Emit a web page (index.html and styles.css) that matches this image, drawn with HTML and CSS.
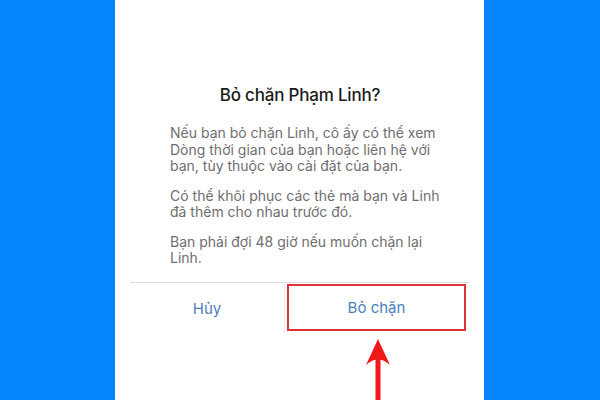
FILE: index.html
```html
<!DOCTYPE html>
<html lang="vi">
<head>
    <meta charset="UTF-8">
    <meta name="viewport" content="width=device-width, initial-scale=1.0">
    <title>Bỏ chặn Phạm Linh?</title>
    <link rel="stylesheet" href="styles.css">
</head>
<body>
    <div class="side"></div>

    <div class="screen">
        <div class="dialog">
            <div class="dialog-title">Bỏ chặn Phạm Linh?</div>

            <div class="dialog-body">
                <p>Nếu bạn bỏ chặn Linh, cô ấy có thể xem Dòng thời gian của bạn hoặc liên hệ với bạn, tùy thuộc vào cài đặt của bạn.</p>
                <p>Có thể khôi phục các thẻ mà bạn và Linh đã thêm cho nhau trước đó.</p>
                <p>Bạn phải đợi 48 giờ nếu muốn chặn lại Linh.</p>
            </div>

            <div class="dialog-actions">
                <button class="action-btn">Hủy</button>
                <button class="action-btn highlighted">Bỏ chặn</button>
            </div>
        </div>

        <!-- pointer to the unblock button -->
        <svg class="arrow" width="26" height="62" viewBox="0 0 26 62">
            <path d="M13 1 L25 27 Q18 21 13 22 Q8 21 1 27 Z" fill="#f01818"/>
            <rect x="10.5" y="20" width="5" height="42" fill="#f01818"/>
        </svg>
    </div>

    <div class="side"></div>
</body>
</html>
```

FILE: styles.css
```css
* {
    margin: 0;
    padding: 0;
    box-sizing: border-box;
}

body {
    font-family: Inter, 'Noto Sans', sans-serif;
    background-color: #0584fb;
    height: 100vh;
    overflow: hidden;
    display: flex;
}

.side {
    width: 115px;
    flex-shrink: 0;
    background: #0584fb;
}

.screen {
    position: relative;
    width: 369px;
    flex-shrink: 0;
    background: #ffffff;
    padding: 84px 14px 0 15px;
}

.dialog-title {
    font-size: 17px;
    line-height: 22px;
    font-weight: 500;
    color: #1a1a1a;
    text-align: center;
    letter-spacing: -0.2px;
}

.dialog-body {
    padding: 19px 30px 15px 40px;
    font-size: 14px;
    line-height: 16.5px;
    color: #6e6e6e;
}

.dialog-body p + p {
    margin-top: 13px;
}

.dialog-actions {
    display: flex;
    border-top: 1px solid #dedede;
    height: 52px;
}

.action-btn {
    flex: 1;
    background: none;
    border: none;
    font-family: inherit;
    font-size: 15px;
    color: #4b80bb;
    cursor: pointer;
}

.action-btn:first-child {
    flex: 0 0 155px;
    border-right: 1px solid #ececec;
}

.action-btn.highlighted {
    margin: 1px 4px 3px 2px;
    border: 2px solid #e0323a;
}

.arrow {
    position: absolute;
    left: 250px;
    top: 338px;
}
```
